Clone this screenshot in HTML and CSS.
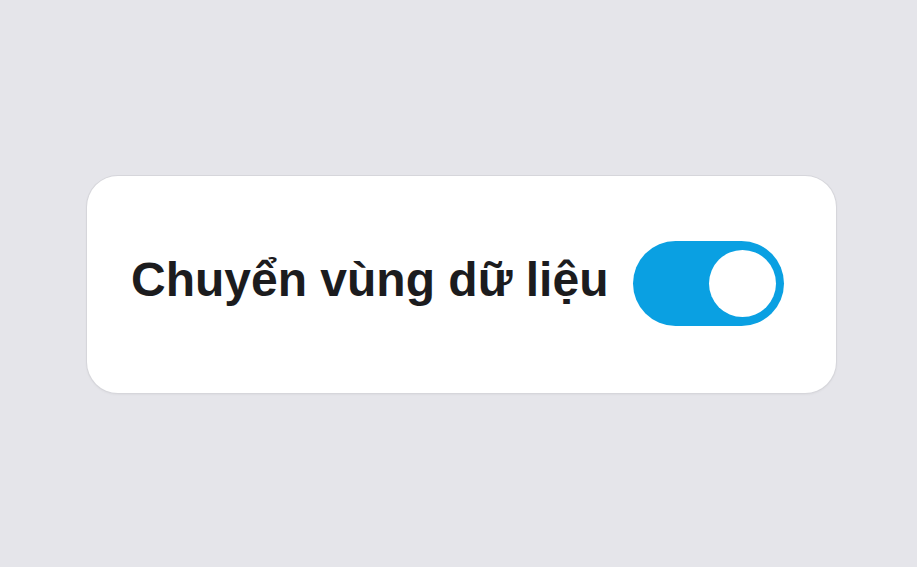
FILE: index.html
```html
<!DOCTYPE html>
<html lang="vi">
<head>
<meta charset="utf-8">
<title>Chuyển vùng dữ liệu</title>
<link rel="stylesheet" href="styles.css">
</head>
<body>
<main class="stage">
  <section class="card">
    <span class="label">Chuyển vùng dữ liệu</span>
    <button class="toggle is-on" type="button" role="switch" aria-checked="true" aria-label="Chuyển vùng dữ liệu">
      <span class="knob"></span>
    </button>
  </section>
</main>
</body>
</html>
```
FILE: styles.css
```css
html, body {
  margin: 0;
  padding: 0;
}
body {
  background: #e5e5ea;
  width: 917px;
  height: 567px;
  overflow: hidden;
  font-family: "Liberation Sans", Arial, sans-serif;
}
.stage {
  padding: 176px 0 0 87px;
}
.card {
  box-sizing: border-box;
  width: 749px;
  height: 217px;
  background: #ffffff;
  border-radius: 31px;
  box-shadow: 0 0 0 1px #d6d6db, 0 1px 3px rgba(0, 0, 0, 0.08);
  display: flex;
  align-items: center;
  padding: 0 52px 0 44px;
  gap: 25px;
}
.label {
  flex: 1;
  font-size: 48px;
  font-weight: 700;
  color: #1c1c1e;
  letter-spacing: 0;
  white-space: nowrap;
  padding-bottom: 10px;
}
.toggle {
  box-sizing: border-box;
  width: 151px;
  height: 85px;
  border: 0;
  border-radius: 43px;
  background: #0aa0e2;
  padding: 9px 8px;
  display: flex;
  justify-content: flex-end;
  align-items: center;
  cursor: pointer;
  margin-top: -2px;
}
.knob {
  width: 67px;
  height: 67px;
  border-radius: 50%;
  background: #ffffff;
}
```
